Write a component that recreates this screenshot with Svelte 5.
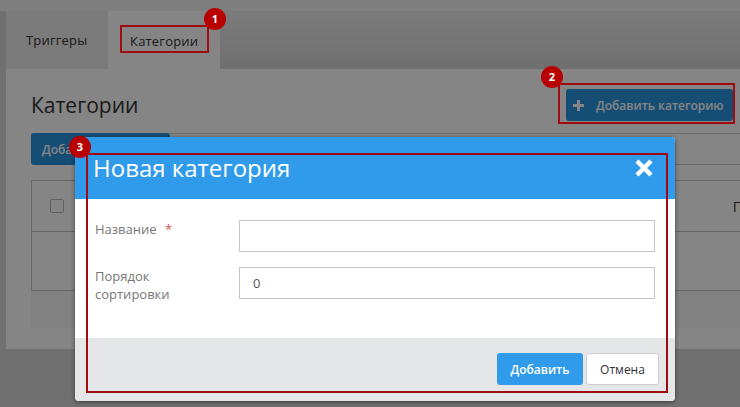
<script>
  const tabs = ['Триггеры', 'Категории'];
</script>

<div class="page">
  <div class="tabs">
    {#each tabs as tab, i}
      <div class="tab" class:active={i === 1}>{tab}</div>
    {/each}
  </div>

  <div class="panel">
    <div class="head">
      <h1>Категории</h1>
      <button class="btn primary big">
        <svg class="plus" viewBox="0 0 11 11" width="11" height="11">
          <path d="M5.5 0 V11 M0 5.5 H11" stroke="currentColor" stroke-width="3" />
        </svg>
        Добавить категорию
      </button>
    </div>
    <div class="toolbar">
      <button class="btn primary small">Добавить</button>
    </div>
    <div class="table-wrap">
      <div class="table">
        <div class="row head-row">
          <span class="check"></span>
          <span class="col-last">П</span>
        </div>
        <div class="row body-row"></div>
      </div>
    </div>
  </div>
</div>

<div class="overlay"></div>

<div class="modal">
  <div class="modal-head">
    <h2>Новая категория</h2>
    <svg class="close" viewBox="0 0 20 20" width="20" height="20">
      <path d="M3 3 L17 17 M17 3 L3 17" stroke="#fff" stroke-width="4.5" />
    </svg>
  </div>
  <div class="modal-body">
    <div class="field">
      <label for="name">Название <i>*</i></label>
      <input id="name" type="text" />
    </div>
    <div class="field">
      <label for="order">Порядок сортировки</label>
      <input id="order" type="text" value="0" />
    </div>
  </div>
  <div class="modal-foot">
    <button class="add">Добавить</button>
    <button class="cancel">Отмена</button>
  </div>
</div>

<div class="mark m1"></div>
<div class="mark m2"></div>
<div class="mark m3"></div>
<div class="badge b1">1</div>
<div class="badge b2">2</div>
<div class="badge b3">3</div>

<style>
  :global(body) {
    margin: 0;
    background: #d6d6d6;
    font-family: 'Open Sans', 'Noto Sans', sans-serif;
    overflow: hidden;
  }

  .page {
    height: 407px;
    padding: 11px 0 0 6px;
    box-sizing: border-box;
    background: linear-gradient(#f4f4f4 11px, #d6d6d6 11px);
    color: #333;
  }

  .tabs {
    display: flex;
    height: 58px;
    background: linear-gradient(#ececec, #d6d6d6);
  }

  .tab {
    width: 102px;
    box-sizing: border-box;
    padding: 20px 0 0 20px;
    font-size: 13px;
    font-weight: 500;
    letter-spacing: 0.2px;
    background: #ebebeb;
  }

  .tab.active {
    width: 112px;
    padding: 21px 0 0 22px;
    background: #fff;
  }

  .panel {
    height: 280px;
    background: #fff;
    padding: 0 0 0 25px;
    box-sizing: border-box;
  }

  .head {
    display: flex;
    justify-content: space-between;
    align-items: flex-start;
    height: 64px;
    padding: 20px 7px 0 0;
    box-sizing: border-box;
  }

  h1 {
    margin: 2px 0 0;
    font-size: 21px;
    font-weight: 400;
    line-height: 28px;
  }

  .btn {
    border: 0;
    border-radius: 3px;
    background: #2b95e0;
    color: #fff;
    font-family: inherit;
    font-weight: 600;
    font-size: 12px;
  }

  .big {
    width: 167px;
    height: 32px;
    padding: 0 0 0 7px;
    text-align: left;
    display: flex;
    align-items: center;
    gap: 12px;
  }

  .plus {
    flex: none;
  }

  .toolbar {
    height: 47px;
    border-top: 1px solid #d2d2d2;
    box-sizing: border-box;
    position: relative;
  }

  /* second rule level with the button's bottom, only visible right of the modal */
  .toolbar::after {
    content: '';
    position: absolute;
    left: 139px;
    right: 0;
    top: 30px;
    border-top: 1px solid #c4c4c4;
  }

  .small {
    display: block;
    width: 139px;
    height: 32px;
    margin-top: -1px;
    text-align: left;
    padding-left: 11px;
  }

  .table-wrap {
    height: 148px;
    background: #f8f8f8;
  }

  .table {
    border: 1px solid #c4c4c4;
    border-right: 0;
    height: 111px;
    box-sizing: border-box;
    background: #fff;
  }

  .row {
    display: flex;
    align-items: center;
    justify-content: space-between;
    box-sizing: border-box;
    overflow: hidden;
  }

  .head-row {
    height: 51px;
    padding: 0 0 0 18px;
    border-bottom: 1px solid #c4c4c4;
    font-size: 14px;
  }

  .col-last {
    margin-right: -3px;
  }

  .check {
    width: 14px;
    height: 14px;
    box-sizing: border-box;
    border: 1px solid #bbb;
    border-radius: 2px;
  }

  .overlay {
    position: absolute;
    inset: 0;
    background: rgba(0, 0, 0, 0.48);
  }

  .modal {
    position: absolute;
    left: 75px;
    top: 137px;
    width: 600px;
    height: 264px;
    border-radius: 4px;
    overflow: hidden;
    background: #fff;
    display: flex;
    flex-direction: column;
    box-shadow: 0 1px 4px rgba(0, 0, 0, 0.5);
  }

  .modal-head {
    height: 62px;
    flex: none;
    background: #2f9bea;
    color: #fff;
    display: flex;
    justify-content: space-between;
    padding: 15px 21px 0 18px;
    box-sizing: border-box;
  }

  h2 {
    margin: 0;
    font-size: 24px;
    font-weight: 400;
    line-height: 32px;
  }

  .close {
    margin-top: 6px;
  }

  .modal-body {
    flex: 1;
    padding: 21px 20px 0 20px;
  }

  .field {
    display: flex;
    margin-bottom: 15px;
  }

  label {
    width: 144px;
    font-size: 13px;
    line-height: 18px;
    color: #777;
    padding-right: 40px;
    box-sizing: border-box;
  }

  label i {
    font-style: normal;
    color: #d9534f;
    margin-left: 5px;
  }

  input {
    flex: 1;
    min-width: 0;
    height: 32px;
    box-sizing: border-box;
    border: 1px solid #c4c4c4;
    padding: 0 13px;
    font-family: inherit;
    font-size: 13px;
    color: #555;
    background: #fff;
  }

  .modal-foot {
    height: 63px;
    flex: none;
    background: #e5e6e8;
    display: flex;
    justify-content: flex-end;
    gap: 3px;
    padding: 15px 16px 0 0;
    box-sizing: border-box;
  }

  .modal-foot button {
    height: 32px;
    border-radius: 3px;
    font-family: inherit;
    font-size: 12px;
    padding: 0;
  }

  .add {
    width: 86px;
    border: 0;
    background: #2f9bea;
    color: #fff;
    font-weight: 600;
  }

  .cancel {
    width: 73px;
    border: 1px solid #ccc;
    background: #fff;
    color: #333;
    font-weight: 500;
  }

  .mark {
    position: absolute;
    border: 2px solid #9e0b10;
    box-sizing: border-box;
  }

  .m1 { left: 120px; top: 25px; width: 89px; height: 28px; }
  .m2 { left: 558px; top: 83px; width: 177px; height: 41px; }
  .m3 { left: 86px; top: 153px; width: 582px; height: 240px; }

  .badge {
    position: absolute;
    width: 22px;
    height: 22px;
    border-radius: 50%;
    background: #b80000;
    color: #fff;
    font-size: 11px;
    font-weight: 700;
    line-height: 22px;
    text-align: center;
  }

  .b1 { left: 204px; top: 8px; }
  .b2 { left: 541px; top: 66px; }
  .b3 { left: 69px; top: 136px; }
</style>
